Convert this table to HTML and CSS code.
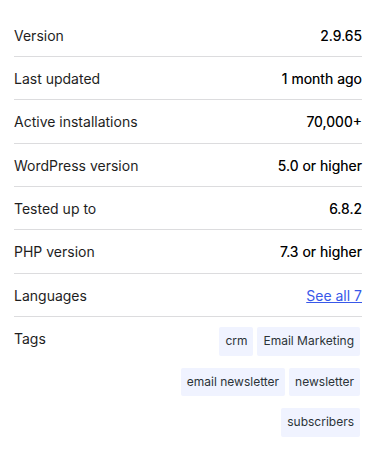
FILE: index.html
```html
<!doctype html>
<html lang="en">
    <head>
        <meta charset="UTF-8" />
        <meta name="viewport" content="width=device-width, initial-scale=1.0" />
        <title>Plugin details</title>
        <link rel="stylesheet" href="styles.css">
    </head>
    <body>
        <ul class="meta">
            <li class="meta-row">
                <span class="label">Version</span>
                <strong class="value">2.9.65</strong>
            </li>
            <li class="meta-row">
                <span class="label">Last updated</span>
                <strong class="value">1 month ago</strong>
            </li>
            <li class="meta-row">
                <span class="label">Active installations</span>
                <strong class="value">70,000+</strong>
            </li>
            <li class="meta-row">
                <span class="label">WordPress version</span>
                <strong class="value">5.0 or higher</strong>
            </li>
            <li class="meta-row">
                <span class="label">Tested up to</span>
                <strong class="value">6.8.2</strong>
            </li>
            <li class="meta-row">
                <span class="label">PHP version</span>
                <strong class="value">7.3 or higher</strong>
            </li>
            <li class="meta-row">
                <span class="label">Languages</span>
                <a class="value link" href="#">See all 7</a>
            </li>
            <li class="meta-row tags-row">
                <span class="label">Tags</span>
                <div class="tags">
                    <a class="tag" href="#">crm</a>
                    <a class="tag" href="#">Email Marketing</a>
                    <a class="tag" href="#">email newsletter</a>
                    <a class="tag" href="#">newsletter</a>
                    <a class="tag" href="#">subscribers</a>
                </div>
            </li>
        </ul>
    </body>
</html>
```

FILE: styles.css
```css
* {
    margin: 0;
    padding: 0;
    box-sizing: border-box;
}
body {
    font-family: Inter, "Noto Sans", sans-serif;
    background-color: #ffffff;
    color: #1e1e1e;
    font-size: 14px;
    padding: 13.67px 18px 0 14px;
}
.meta {
    list-style: none;
}
.meta-row {
    display: flex;
    justify-content: space-between;
    align-items: flex-start;
    padding: 12px 0 10px;
    line-height: 20.33px;
    border-bottom: 1px solid #dcdcde;
}
.label {
    color: #1e1e1e;
}
.value {
    font-weight: 400;
    color: #000000;
    text-shadow: 0 0 0.4px rgba(0, 0, 0, 0.5);
}
.link {
    color: #3858e9;
    text-decoration: underline;
    text-shadow: none;
}
.tags-row {
    border-bottom: none;
}
.tags {
    display: flex;
    flex-wrap: wrap;
    justify-content: flex-end;
    row-gap: 12px;
    max-width: 200px;
    margin-top: -1.5px;
}
.tag {
    display: block;
    margin: 0 2px;
    padding: 0 6px;
    height: 28.5px;
    line-height: 28.5px;
    font-size: 12px;
    color: #2c3338;
    background-color: #f0f3ff;
    border-radius: 2px;
    text-decoration: none;
}
```
